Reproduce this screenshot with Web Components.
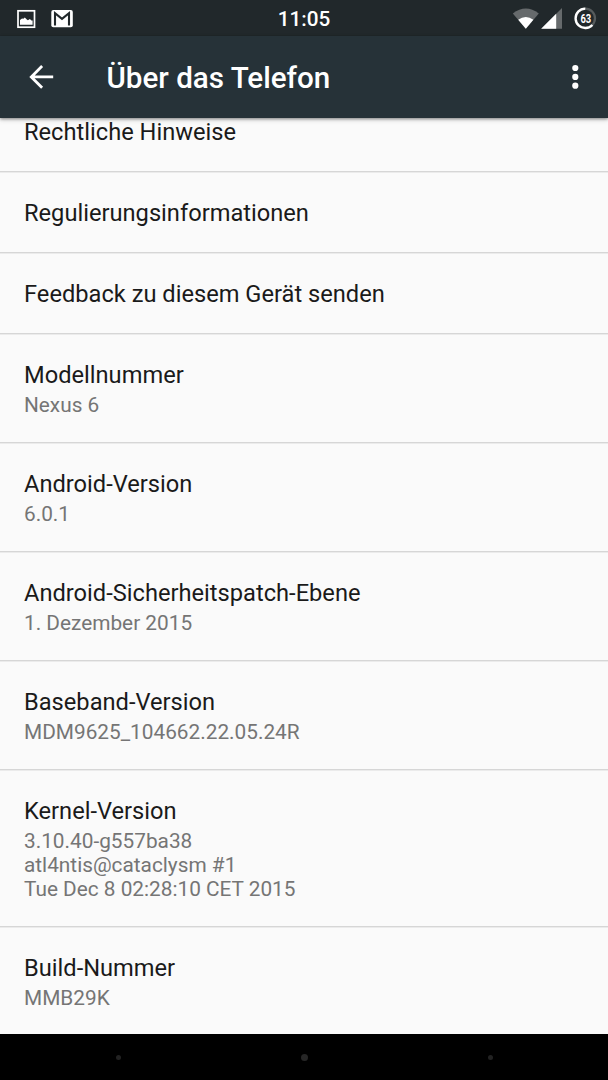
<!DOCTYPE html>
<html lang="de">
<head>
<meta charset="utf-8">
<title>Über das Telefon</title>
<style>
html,body{margin:0;height:100%;overflow:hidden;background:#fafafa;font-family:Roboto,sans-serif}
</style>
</head>
<body>
<phone-screen>
  <status-bar slot="status" time="11:05" battery="63"></status-bar>
  <app-bar slot="bar">Über das Telefon</app-bar>
  <pref-item>Rechtliche Hinweise</pref-item>
  <pref-item>Regulierungsinformationen</pref-item>
  <pref-item>Feedback zu diesem Gerät senden</pref-item>
  <pref-item>Modellnummer<span slot="summary">Nexus 6</span></pref-item>
  <pref-item>Android-Version<span slot="summary">6.0.1</span></pref-item>
  <pref-item>Android-Sicherheitspatch-Ebene<span slot="summary">1. Dezember 2015</span></pref-item>
  <pref-item>Baseband-Version<span slot="summary">MDM9625_104662.22.05.24R</span></pref-item>
  <pref-item>Kernel-Version<span slot="summary">3.10.40-g557ba38<br>atl4ntis@cataclysm #1<br>Tue Dec 8 02:28:10 CET 2015</span></pref-item>
  <pref-item>Build-Nummer<span slot="summary">MMB29K</span></pref-item>
  <nav-bar slot="nav"></nav-bar>
</phone-screen>
<script>
function define(name, html, setup) {
  customElements.define(name, class extends HTMLElement {
    constructor() {
      super();
      this.attachShadow({mode: 'open'}).innerHTML = html;
    }
    connectedCallback() { if (setup) setup(this, this.shadowRoot); }
  });
}

define('phone-screen', `
<style>
:host{display:flex;flex-direction:column;width:608px;height:1080px;overflow:hidden;background:#fafafa}
main{flex:1;min-height:0;overflow:hidden}
.list{margin-top:-26px}
</style>
<slot name="status"></slot><slot name="bar"></slot>
<main><div class="list"><slot></slot></div></main>
<slot name="nav"></slot>`);

define('status-bar', `
<style>
:host{display:grid;grid-template-columns:1fr auto 1fr;align-items:center;height:36px;flex:none;background:#21282b;color:#fff}
.left,.right{display:flex;align-items:center;height:36px}
.left{padding-left:16px;gap:15px}
.right{justify-content:flex-end;padding-right:11px}
.time{font-weight:500;font-size:20.7px;line-height:36px;padding-top:1px}
svg{display:block}
</style>
<div class="left">
  <svg width="20" height="36" viewBox="0 0 20 36"><rect x="2" y="9.8" width="16.5" height="16.4" fill="none" stroke="#fff" stroke-width="1.7"/><path d="M4 23.8v-4.7l2-1.7 1.4.4 1.4-1.2 2 2 1.1.7 2-1.2 1.5 1.4 1.2 0v4.3z" fill="#fff"/></svg>
  <svg width="23" height="36" viewBox="0 0 23 36"><rect x=".3" y="9.1" width="21.5" height="17.2" rx="2" fill="#fff"/><path d="M4 24.5V12.2l7 5.7 7-5.7v12.3" fill="none" stroke="#21282b" stroke-width="2.1"/></svg>
</div>
<div class="time"></div>
<div class="right">
  <svg width="88" height="36" viewBox="509 0 88 36">
    <path d="M512.8 12.5Q525.8 2.5 538.8 12.5L525.8 27.8z" fill="#666a6c"/>
    <path d="M518.2 18.8Q525.8 13.2 533.4 18.8L525.8 27.8z" fill="#fff"/>
    <path d="M562 7v20.8h-20.8z" fill="#666a6c"/>
    <path d="M556.2 12.8v15h-15z" fill="#fff"/>
    <circle cx="585.3" cy="17.3" r="9.7" fill="none" stroke="#565b5d" stroke-width="2.3"/>
    <circle cx="585.3" cy="17.3" r="9.7" fill="none" stroke="#fff" stroke-width="2.3" pathLength="100" stroke-dasharray="63 37" transform="rotate(43.2 585.3 17.3)"/>
    <text x="580.4" y="21.7" textLength="10.8" lengthAdjust="spacingAndGlyphs" font-family="Roboto,sans-serif" font-weight="700" font-size="12" fill="#fff"></text>
  </svg>
</div>`, (el, root) => {
  root.querySelector('.time').textContent = el.getAttribute('time');
  root.querySelector('text').textContent = el.getAttribute('battery');
});

define('app-bar', `
<style>
:host{display:flex;align-items:center;height:82px;flex:none;background:#263238;color:#fff;box-shadow:0 1px 3px rgba(0,0,0,.45),0 3px 5px rgba(0,0,0,.08);position:relative;z-index:1}
.back{padding-left:24px}
h1{flex:1;margin:0 0 0 46.5px;font-weight:500;font-size:29.6px;line-height:36px;padding-top:2px}
svg{display:block}
.more{padding-right:21px}
</style>
<svg class="back" width="36" height="82" viewBox="24 36 36 82"><path d="M53.2 76.9H31.8M42.1 66.1L31.3 76.9l10.8 10.8" fill="none" stroke="#fff" stroke-width="2.8"/></svg>
<h1><slot></slot></h1>
<svg class="more" width="24" height="82" viewBox="563 36 24 82"><g fill="#fff"><circle cx="575.3" cy="68" r="3.1"/><circle cx="575.3" cy="76.9" r="3.1"/><circle cx="575.3" cy="85.7" r="3.1"/></g></svg>`);

define('pref-item', `
<style>
:host{display:block;padding:26px 24px 25px;border-bottom:1px solid #d6d6d6;box-shadow:0 1px #ebebeb;margin-bottom:1px}
:host(:last-of-type){border:0;box-shadow:none}
.title{font-size:23.66px;line-height:28px;color:#1a1a1a}
.summary{font-size:20.8px;line-height:24px;color:#757575;margin-top:4px}
.summary[hidden]{display:none}
</style>
<div class="title"><slot></slot></div>
<div class="summary"><slot name="summary"></slot></div>`, (el, root) => {
  const slot = root.querySelector('slot[name=summary]');
  const update = () => { root.querySelector('.summary').hidden = !slot.assignedNodes().length; };
  slot.addEventListener('slotchange', update);
  update();
});

define('nav-bar', `
<style>
:host{display:flex;height:46px;flex:none;background:#000;align-items:center;justify-content:center;gap:180px}
i{width:5px;height:5px;border-radius:50%;background:#222}
i.home{width:7px;height:7px;background:#262626}
</style>
<i></i><i class="home"></i><i></i>`);
</script>
</body>
</html>
